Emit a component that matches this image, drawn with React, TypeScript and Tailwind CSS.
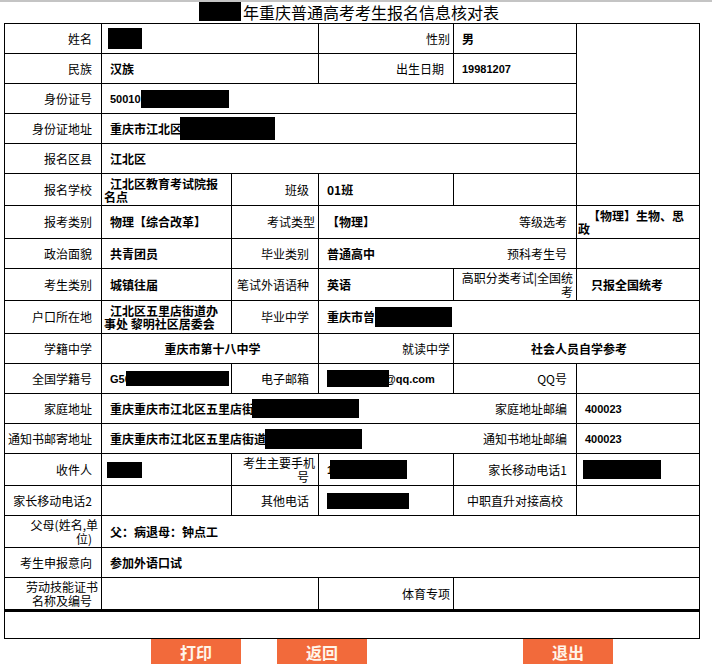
import React from "react";

const Sp = () => <span className="inline-block w-[6px]" />;

function L({
  children,
  cls = "",
  center = false,
}: {
  children?: React.ReactNode;
  cls?: string;
  center?: boolean;
}) {
  return (
    <div
      className={`flex items-center ${center ? "justify-center" : "justify-end"} border-r border-b border-black pl-[3px] pr-[3px] text-[12px] leading-[14px] text-black ${cls}`}
    >
      <div className={center ? "text-center" : "text-right"}>{children}</div>
    </div>
  );
}

function V({ children, cls = "" }: { children?: React.ReactNode; cls?: string }) {
  return (
    <div
      className={`flex items-center border-r border-b border-black pl-[8px] pr-[3px] text-[12px] leading-[14px] font-bold text-black whitespace-nowrap overflow-hidden ${cls}`}
    >
      {children}
    </div>
  );
}

function W({ children, cls = "" }: { children?: React.ReactNode; cls?: string }) {
  return (
    <div
      className={`flex items-center border-r border-b border-black pl-[2px] pr-[3px] text-[12px] leading-[13px] font-bold text-black ${cls}`}
    >
      <div className="indent-[6px]">{children}</div>
    </div>
  );
}

function Box({ cls }: { cls: string }) {
  return <span className={`inline-block shrink-0 bg-black ${cls}`} />;
}

function Num({ children }: { children: React.ReactNode }) {
  return <span className="font-['Liberation_Sans',sans-serif] text-[11px] font-bold">{children}</span>;
}

function Btn({ children, cls = "" }: { children: React.ReactNode; cls?: string }) {
  return (
    <div
      className={`flex h-[25px] w-[90px] items-center justify-center bg-[#f26a3b] text-[16px] font-bold leading-[20px] text-[#fff5ea] ${cls}`}
    >
      {children}
    </div>
  );
}

export default function App() {
  return (
    <div className="h-[669px] w-[712px] overflow-hidden bg-white font-['Noto_Sans_CJK_SC',sans-serif] text-black">
      <div className="h-[2px] bg-[#c4c4c4]" />
      <div className="flex h-[21px] items-start pl-[199px]">
        <Box cls="w-[42px] h-[19px]" />
        <span className="ml-[2px] text-[16px] leading-[20px]">年重庆普通高考考生报名信息核对表</span>
      </div>
      <div className="ml-[4px] grid w-fit grid-cols-[97px_130px_87px_135px_123px_123px] grid-rows-[30px_30px_30px_30px_30px_32px_33px_30px_32px_33px_30px_30px_30px_30px_32px_30px_32px_30px_34px_27px] border-l border-t border-black">
        {/* row 1 */}
        <L>姓名<Sp /></L>
        <V cls="col-span-2">
          <Box cls="w-[34px] h-[21px] -ml-[2px]" />
        </V>
        <L>性别</L>
        <V>男</V>
        <div className="row-span-5 border-r border-b border-black" />
        {/* row 2 */}
        <L>民族<Sp /></L>
        <V cls="col-span-2">汉族</V>
        <L>出生日期<Sp /></L>
        <V>
          <Num>19981207</Num>
        </V>
        {/* row 3 */}
        <L>身份证号<Sp /></L>
        <V cls="col-span-4">
          <Num>50010</Num>
          <Box cls="w-[88px] h-[18px]" />
        </V>
        {/* row 4 */}
        <L>身份证地址<Sp /></L>
        <V cls="col-span-4">
          <span>重庆市江北区</span>
          <Box cls="w-[95px] h-[23px] -ml-[2px]" />
        </V>
        {/* row 5 */}
        <L>报名区县<Sp /></L>
        <V cls="col-span-4">江北区</V>
        {/* row 6 */}
        <L>报名学校<Sp /></L>
        <W>江北区教育考试院报名点</W>
        <L>班级<Sp /></L>
        <V>01班</V>
        <V />
        <V />
        {/* row 7 */}
        <L>报考类别<Sp /></L>
        <V>物理【综合改革】</V>
        <L>考试类型</L>
        <V cls="border-r-0">【物理】</V>
        <L>等级选考<Sp /></L>
        <div className="flex items-center border-r border-b border-black pl-[1px] pr-[2px] text-[12px] leading-[13px] font-bold">
          <div className="indent-[10px]">
            【物理】生物、思
            <br />政
          </div>
        </div>
        {/* row 8 */}
        <L>政治面貌<Sp /></L>
        <V>共青团员</V>
        <L>毕业类别<Sp /></L>
        <V cls="border-r-0">普通高中</V>
        <L>预科考生号<Sp /></L>
        <V />
        {/* row 9 */}
        <L>考生类别<Sp /></L>
        <V>城镇往届</V>
        <L>笔试外语语种<Sp /></L>
        <V>英语</V>
        <L>
          高职分类考试|全国统
          <br />考
        </L>
        <V cls="pl-[14px]">只报全国统考</V>
        {/* row 10 */}
        <L>户口所在地<Sp /></L>
        <W>江北区五里店街道办事处 黎明社区居委会</W>
        <L>毕业中学<Sp /></L>
        <V cls="col-span-3">
          <span>重庆市曾</span>
          <Box cls="w-[77px] h-[20px]" />
        </V>
        {/* row 11 */}
        <L>学籍中学<Sp /></L>
        <V cls="col-span-2 justify-center pl-[3px]">重庆市第十八中学</V>
        <L>就读中学</L>
        <V cls="col-span-2 justify-center pl-[3px]">社会人员自学参考</V>
        {/* row 12 */}
        <L>全国学籍号<Sp /></L>
        <V>
          <Num>G50</Num>
          <Box cls="w-[103px] h-[15px] -ml-[5px]" />
        </V>
        <L>电子邮箱<Sp /></L>
        <V cls="pl-[5px]">
          <Box cls="relative z-10 w-[62px] h-[17px] -mr-[4px]" />
          <Num>@qq.com</Num>
        </V>
        <L>QQ号<Sp /></L>
        <V />
        {/* row 13 */}
        <L>家庭地址<Sp /></L>
        <V cls="col-span-3 border-r-0">
          <span>重庆重庆市江北区五里店街</span>
          <Box cls="w-[107px] h-[19px] -ml-[2px]" />
        </V>
        <L>家庭地址邮编<Sp /></L>
        <V>
          <Num>400023</Num>
        </V>
        {/* row 14 */}
        <L>通知书邮寄地址<Sp /></L>
        <V cls="col-span-3 border-r-0">
          <span>重庆重庆市江北区五里店街道</span>
          <Box cls="w-[97px] h-[20px] -ml-[1px]" />
        </V>
        <L>通知书地址邮编<Sp /></L>
        <V>
          <Num>400023</Num>
        </V>
        {/* row 15 */}
        <L>收件人<Sp /></L>
        <V>
          <Box cls="w-[35px] h-[16px] -ml-[3px]" />
        </V>
        <L>
          考生主要手机
          <br />号<Sp />
        </L>
        <V>
          <Num>1</Num>
          <Box cls="w-[77px] h-[19px] -ml-[3px]" />
        </V>
        <L>家长移动电话1<Sp /></L>
        <V>
          <Box cls="w-[78px] h-[19px] -ml-[2px]" />
        </V>
        {/* row 16 */}
        <L>家长移动电话2<Sp /></L>
        <V />
        <L>其他电话<Sp /></L>
        <V>
          <Box cls="w-[82px] h-[16px]" />
        </V>
        <L center>中职直升对接高校</L>
        <V />
        {/* row 17 */}
        <L>
          父母(姓名,单
          <br />位)<Sp />
        </L>
        <V cls="col-span-5">父：病退母：钟点工</V>
        {/* row 18 */}
        <L>考生申报意向<Sp /></L>
        <V cls="col-span-5">参加外语口试</V>
        {/* row 19 */}
        <L cls="border-b-[3px]">
          劳动技能证书
          <br />名称及编号<Sp />
        </L>
        <V cls="col-span-2 border-b-[3px]" />
        <L cls="border-b-[3px]">体育专项</L>
        <V cls="col-span-2 border-b-[3px]" />
        {/* row 20 */}
        <div className="col-span-6 border-r border-b border-black" />
      </div>
      <div className="flex pl-[151px]">
        <Btn>打印</Btn>
        <Btn cls="ml-[36px]">返回</Btn>
        <Btn cls="ml-[156px]">退出</Btn>
      </div>
    </div>
  );
}
